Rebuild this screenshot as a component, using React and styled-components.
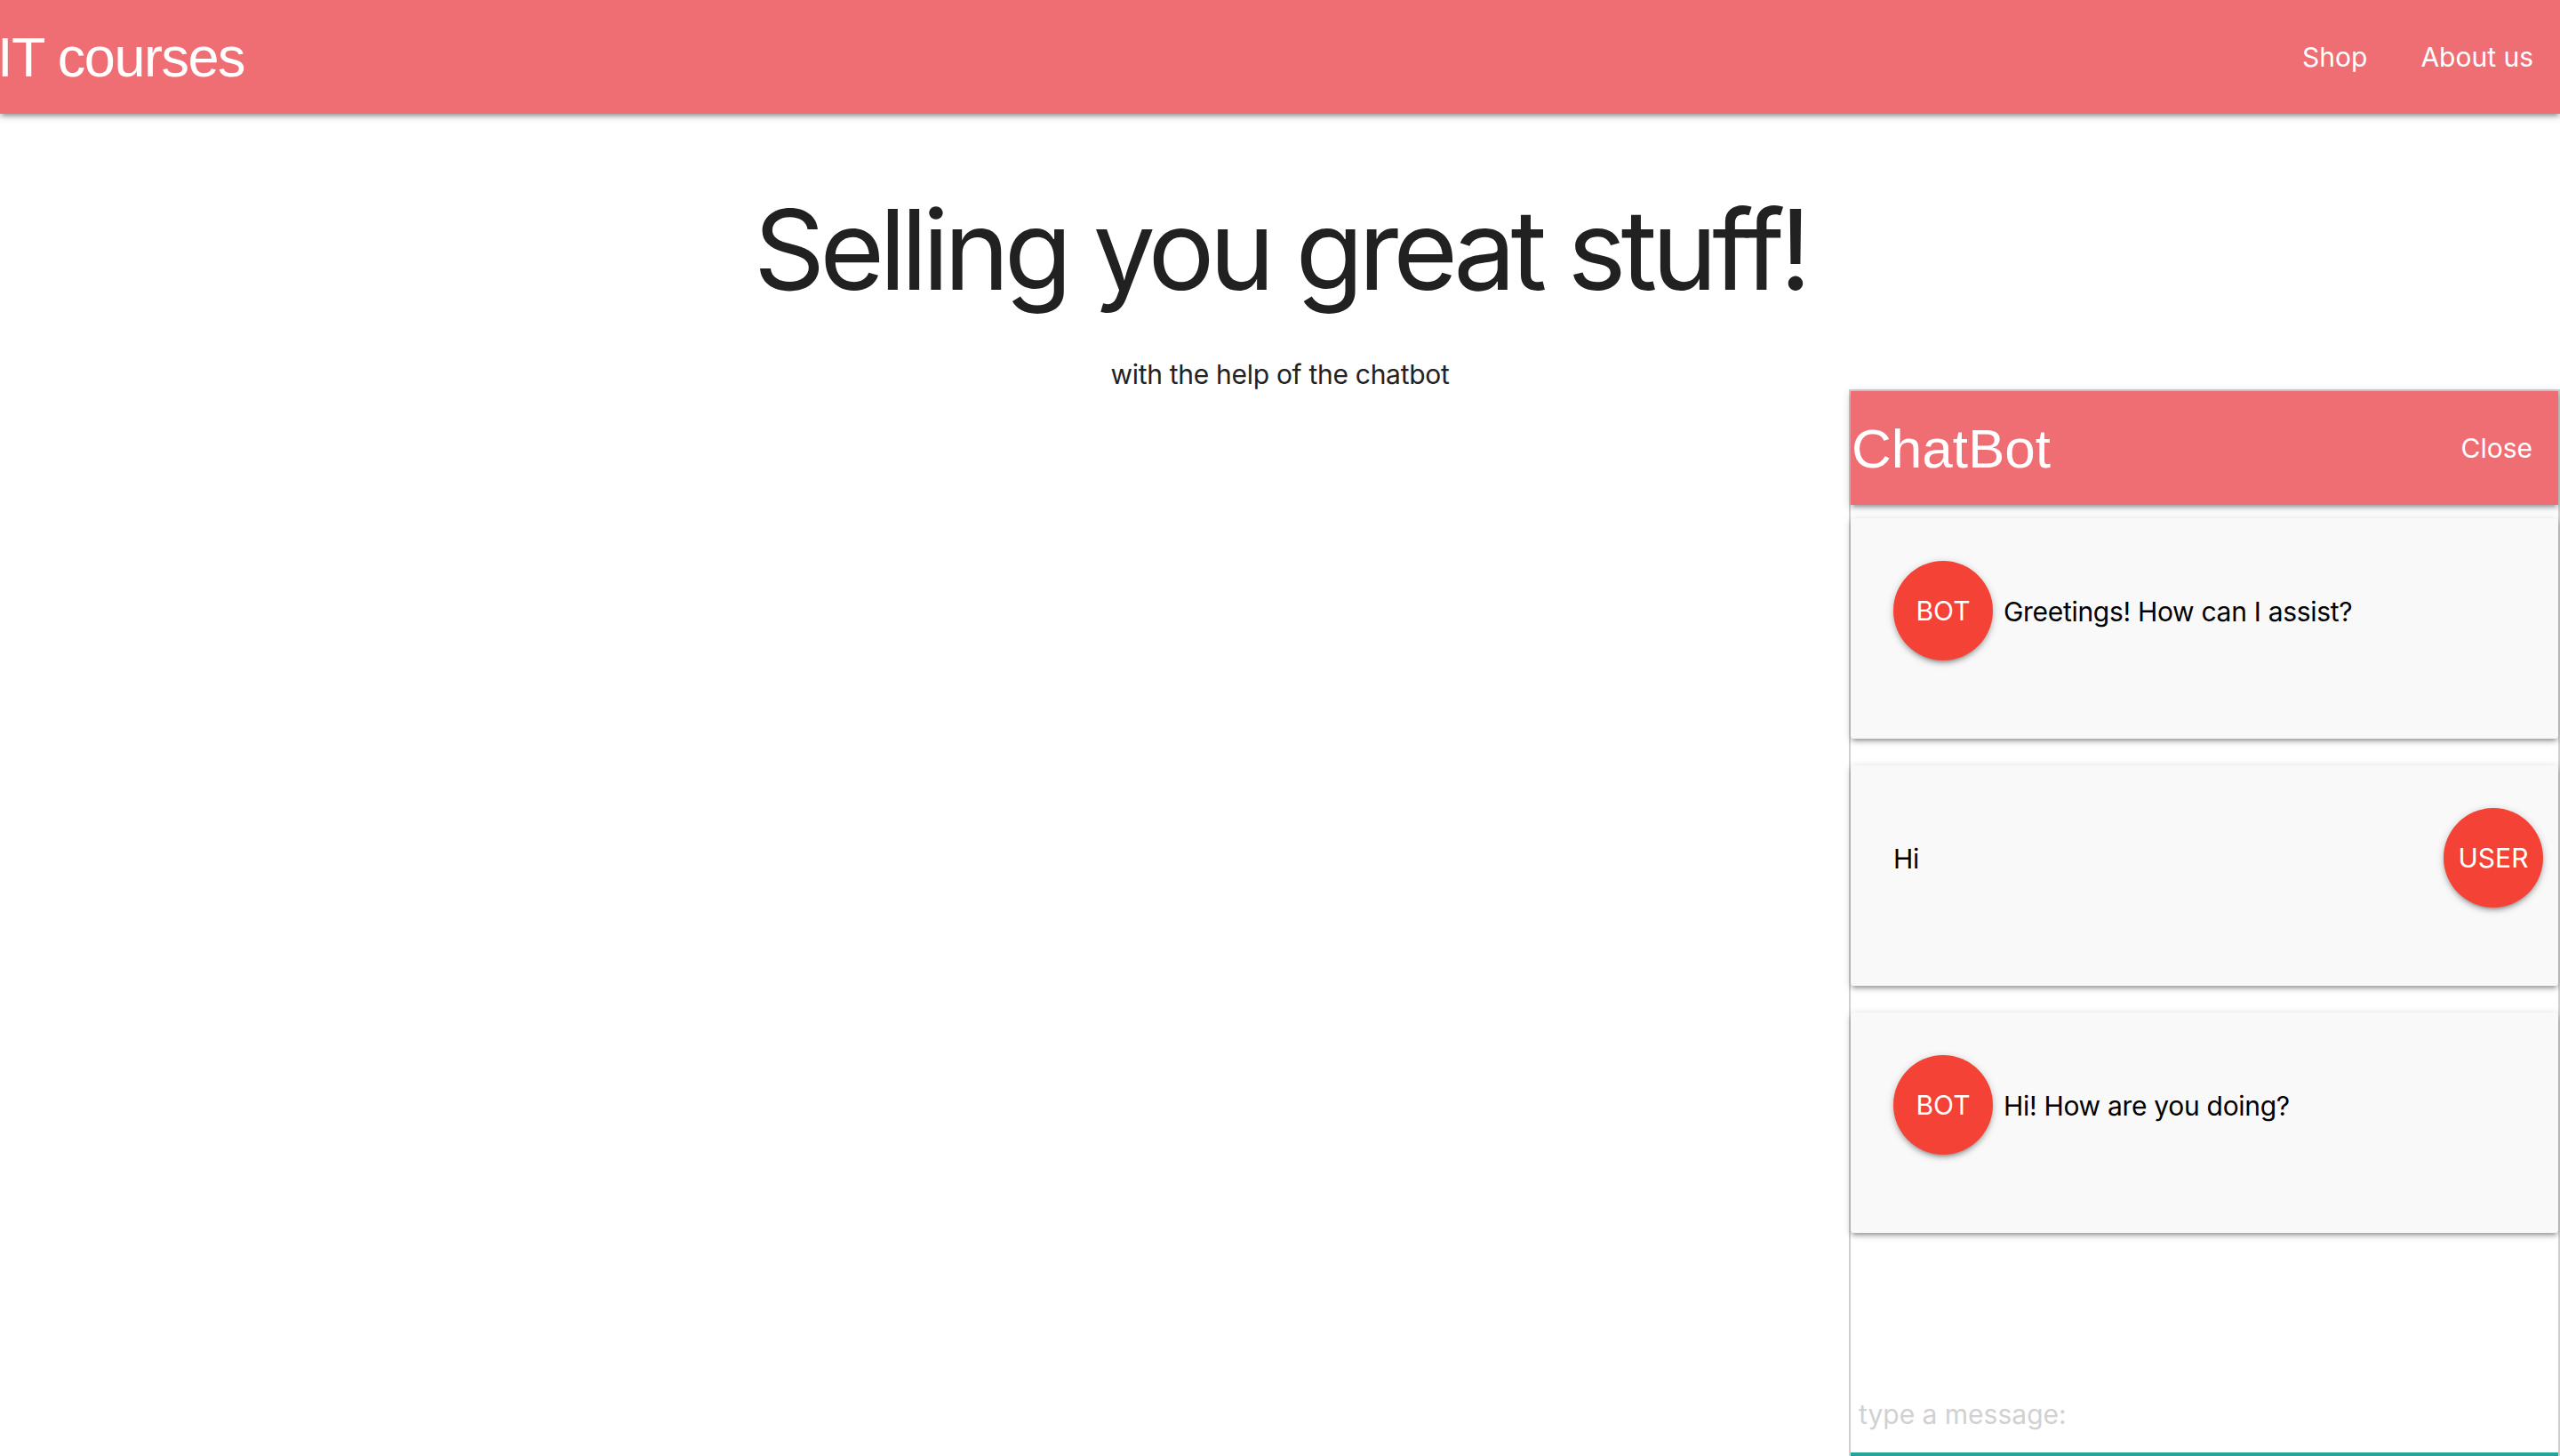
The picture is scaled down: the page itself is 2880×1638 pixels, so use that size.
import React from 'react';
import styled, { createGlobalStyle } from 'styled-components';

const GlobalStyle = createGlobalStyle`
  html, body {
    margin: 0;
    padding: 0;
    background: #ffffff;
    overflow: hidden;
  }
  body {
    font-family: Inter, "Noto Sans", sans-serif;
    color: rgba(0, 0, 0, 0.87);
  }
  #root {
    height: 1638px;
    position: relative;
  }
  * {
    box-sizing: border-box;
  }
`;

const shadow = `0 4px 4px 0 rgba(0,0,0,0.14), 0 6px 2px -4px rgba(0,0,0,0.12), 0 2px 10px 0 rgba(0,0,0,0.2)`;

const Navbar = styled.nav`
  height: 128px;
  background-color: #ef6e74;
  box-shadow: ${shadow};
  display: flex;
  align-items: center;
  justify-content: space-between;
  color: #fff;
  position: relative;
  z-index: 1;
`;

const Brand = styled.a`
  font-family: "Liberation Sans", Arial, sans-serif;
  font-size: 63px;
  letter-spacing: -1.5px;
  color: #fff;
  margin-left: -3px;
  line-height: 128px;
`;

const NavLinks = styled.ul`
  display: flex;
  list-style: none;
  margin: 0;
  padding: 0;
  li a {
    display: block;
    padding: 0 30px;
    font-size: 30px;
    color: #fff;
    line-height: 128px;
  }
`;

const Hero = styled.main`
  text-align: center;
`;

const Title = styled.h1`
  font-size: 125px;
  font-weight: 400;
  line-height: 1.1;
  margin: 84px 0 0;
  color: #212121;
  letter-spacing: -6px;
`;

const Subtitle = styled.p`
  font-size: 30px;
  margin: 53px 0 0;
  color: #222;
  letter-spacing: -0.3px;
`;

const ChatPanel = styled.section`
  position: absolute;
  top: 438px;
  right: 0;
  width: 800px;
  height: 1200px;
  border: 2px solid #cfcfcf;
  border-bottom: none;
  background: #fff;
  display: flex;
  flex-direction: column;
  z-index: 2;
`;

const ChatHeader = styled.header`
  height: 128px;
  flex-shrink: 0;
  background-color: #ef6e74;
  box-shadow: ${shadow};
  display: flex;
  align-items: center;
  justify-content: space-between;
  color: #fff;
`;

const ChatTitle = styled.span`
  font-family: "Liberation Sans", Arial, sans-serif;
  font-size: 62px;
  padding-left: 1px;
`;

const CloseButton = styled.span`
  font-size: 30px;
  padding-right: 29px;
`;

const MessageList = styled.div`
  display: flex;
  flex-direction: column;
  gap: 30px;
  padding-top: 15px;
`;

const Card = styled.div`
  height: 248px;
  background: #f9f9f9;
  border-radius: 4px;
  box-shadow: ${shadow};
  padding: 48px ${(p) => (p.$user ? '17px' : '48px')} 48px 48px;
`;

const Row = styled.div`
  height: 112px;
  display: flex;
  align-items: center;
  justify-content: ${(p) => (p.$user ? 'space-between' : 'flex-start')};
  gap: 12px;
`;

const Avatar = styled.div`
  width: 112px;
  height: 112px;
  border-radius: 50%;
  background-color: #f44336;
  color: #fff;
  font-size: 30px;
  display: flex;
  align-items: center;
  justify-content: center;
  flex-shrink: 0;
  box-shadow: ${shadow};
`;

const MessageText = styled.span`
  font-size: 30px;
  color: #000;
  padding-top: 2px;
  letter-spacing: -0.3px;
`;

const InputArea = styled.div`
  margin-top: auto;
  padding: 0;
`;

const MessageInput = styled.input`
  width: 100%;
  height: 90px;
  border: none;
  border-bottom: 4px solid #26a69a;
  outline: none;
  font-family: Inter, "Noto Sans", sans-serif;
  font-size: 30px;
  padding: 0 0 0 9px;
  background: transparent;
  &::placeholder {
    color: #d1d1d1;
  }
`;

const messages = [
  { from: 'bot', text: 'Greetings! How can I assist?' },
  { from: 'user', text: 'Hi' },
  { from: 'bot', text: 'Hi! How are you doing?' },
];

export default function App() {
  return (
    <>
      <GlobalStyle />
      <Navbar>
        <Brand>IT courses</Brand>
        <NavLinks>
          <li><a>Shop</a></li>
          <li><a>About us</a></li>
        </NavLinks>
      </Navbar>
      <Hero>
        <Title>Selling you great stuff!</Title>
        <Subtitle>with the help of the chatbot</Subtitle>
      </Hero>
      <ChatPanel>
        <ChatHeader>
          <ChatTitle>ChatBot</ChatTitle>
          <CloseButton>Close</CloseButton>
        </ChatHeader>
        <MessageList>
          {messages.map((m, i) =>
            m.from === 'user' ? (
              <Card key={i} $user>
                <Row $user>
                  <MessageText>{m.text}</MessageText>
                  <Avatar>USER</Avatar>
                </Row>
              </Card>
            ) : (
              <Card key={i}>
                <Row>
                  <Avatar>BOT</Avatar>
                  <MessageText>{m.text}</MessageText>
                </Row>
              </Card>
            )
          )}
        </MessageList>
        <InputArea>
          <MessageInput placeholder="type a message:" />
        </InputArea>
      </ChatPanel>
    </>
  );
}
